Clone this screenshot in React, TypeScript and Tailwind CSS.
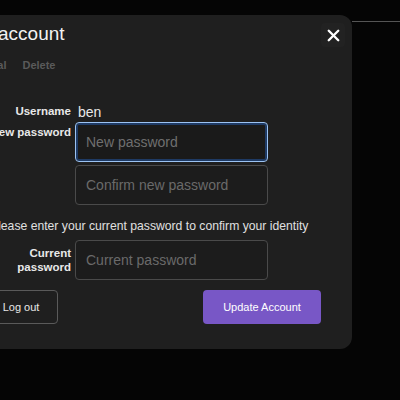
import { X } from "lucide-react";

export default function App() {
  return (
    <div
      className="flex h-[400px] w-[400px] overflow-hidden bg-[#050505]"
      style={{ fontFamily: "'Liberation Sans', Arial, sans-serif" }}
    >
      <div className="ml-[-60px] mt-[15px] h-[334px] w-[412px] shrink-0 rounded-[12px] bg-[#1f1f1f] pl-5 pr-[7px]">
        <div className="flex items-center justify-between pt-[6px]">
          <h2 className="text-[19px] leading-[24px] font-normal text-[#f2f2f2]">Edit account</h2>
          <button className="mt-[2px] flex h-6 w-6 items-center justify-center rounded bg-[#222222]">
            <X className="h-[19px] w-[19px] text-white" strokeWidth={3} />
          </button>
        </div>

        <div className="mt-[10px] flex gap-4 text-[11px] leading-4 font-bold text-[#5a5a5a]">
          <span>Personal</span>
          <span>Delete</span>
        </div>

        <div className="mt-[29px] pl-[30px]">
          <div className="grid grid-cols-[81px_193px] gap-x-[4px]">
            <div className="flex h-5 items-center justify-end text-[11.5px] font-bold text-[#e8e8e8]">
              Username
            </div>
            <div className="flex h-5 items-center pl-[3px] text-[14px] text-[#e8e8e8]">ben</div>

            <div className="pt-[2px] text-right text-[11.5px] leading-4 font-bold text-[#e8e8e8] whitespace-nowrap">
              New password
            </div>
            <input
              placeholder="New password"
              className="h-10 rounded-[4px] border border-[#9cc3f2] bg-[#1a1a1a] px-[10px] text-[14px] text-white outline-none ring-2 ring-[#1e3a64] ring-inset placeholder:text-[#6f6f6f]"
            />

            <div />
            <input
              placeholder="Confirm new password"
              className="mt-[3px] h-10 rounded-[4px] border border-[#4a4a4a] bg-[#1c1c1c] px-[10px] text-[14px] text-white outline-none placeholder:text-[#6a6a6a]"
            />

            <p className="col-span-2 mt-[13px] text-[12.2px] leading-4 whitespace-nowrap text-[#e0e0e0]">
              Please enter your current password to confirm your identity
            </p>

            <div className="mt-[6px] flex flex-col items-end justify-center text-[11.5px] leading-[14px] font-bold text-[#e8e8e8]">
              <span>Current</span>
              <span>password</span>
            </div>
            <input
              placeholder="Current password"
              className="mt-[6px] h-10 rounded-[4px] border border-[#4a4a4a] bg-[#1c1c1c] px-[10px] text-[14px] text-white outline-none placeholder:text-[#6a6a6a]"
            />
          </div>

          <div className="mt-[10px] flex w-[331px] items-center justify-between">
            <button className="ml-[-6px] h-[34px] w-[74px] rounded-[4px] border border-[#5a5a5a] text-[11px] text-[#e8e8e8]">
              Log out
            </button>
            <button className="h-[34px] w-[118px] rounded-[4px] bg-[#7857c6] text-[11px] text-white">
              Update Account
            </button>
          </div>
        </div>
      </div>

      <div className="mt-[21px] flex-1 border-t border-[#555]" />
    </div>
  );
}
